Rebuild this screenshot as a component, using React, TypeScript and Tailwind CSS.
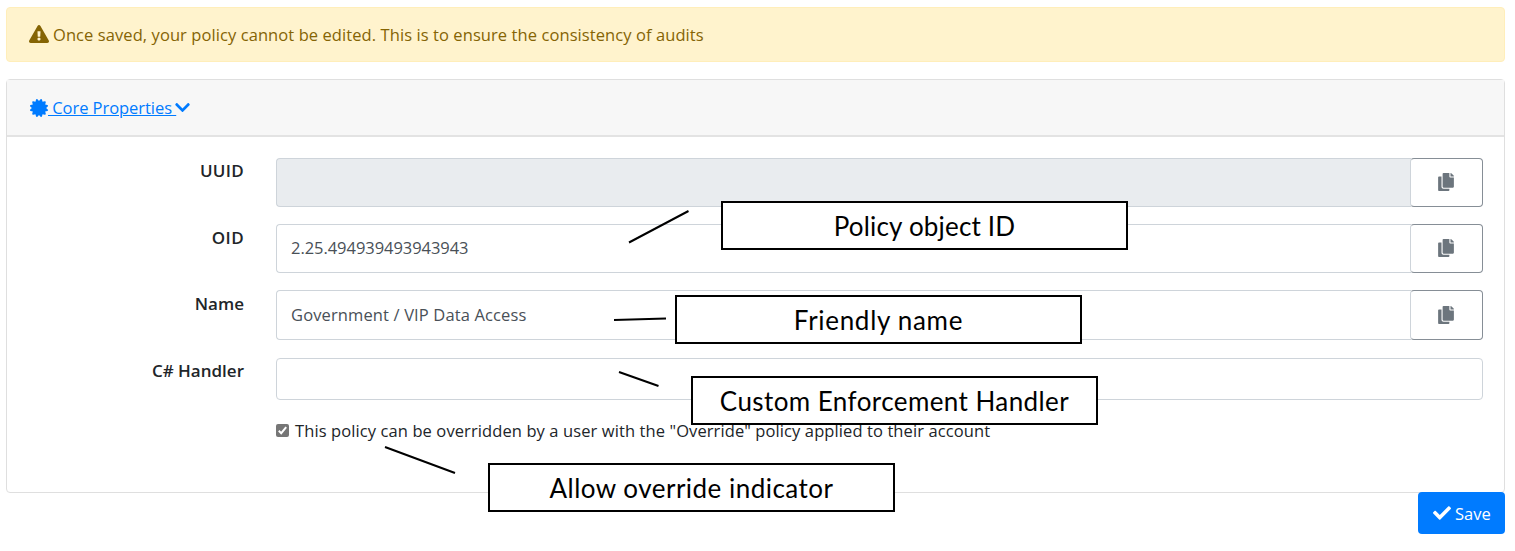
import type { ReactNode } from "react";
import {
  FaCertificate,
  FaCheck,
  FaChevronDown,
  FaCopy,
  FaExclamationTriangle,
} from "react-icons/fa";

function Row({ label, spacing = "leading-[27px]", children }: { label: string; spacing?: string; children: ReactNode }) {
  return (
    <div className="flex">
      <label className={`w-[237px] shrink-0 text-right text-[17px] font-semibold ${spacing}`}>
        {label}
      </label>
      <div className="ml-8 flex min-w-0 flex-1">{children}</div>
    </div>
  );
}

function CopyField({ value, spacing = "", disabled = false }: { value: string; spacing?: string; disabled?: boolean }) {
  return (
    <>
      <input
        readOnly
        defaultValue={value}
        className={`min-w-0 flex-1 rounded-l-[4px] border border-r-0 border-[#ced4da] px-[14px] text-[16.5px] text-[#495057] outline-none ${
          disabled ? "bg-[#e9ecef]" : "bg-white"
        } ${spacing}`}
      />
      <button
        aria-label="Copy"
        className="-ml-px flex w-[73px] items-center justify-center rounded-[4px] border border-[#868e96] border-l-[#ced4da] bg-white pr-px pb-px text-[#6c757d]"
      >
        <FaCopy className="size-[18px]" />
      </button>
    </>
  );
}

function Callout({ text, box, spacing }: { text: string; box: string; spacing: string }) {
  return (
    <div
      className={`absolute flex h-[49px] w-[407px] items-center justify-center border-2 border-black bg-white pt-[2px] font-['Lato',sans-serif] text-[26px] whitespace-nowrap text-black ${box}`}
    >
      <span className={spacing}>{text}</span>
    </div>
  );
}

export default function App() {
  return (
    <div className="relative h-[551px] w-[1515px] overflow-hidden bg-white pt-[7px] pr-[10px] pl-[6px] font-['Open_Sans',sans-serif] text-[#212529]">
      <div className="flex h-[55px] items-center rounded-[4px] border border-[#ffeeba] bg-[#fff3cd] pl-[22px] text-[#856404]">
        <FaExclamationTriangle className="mb-px h-[18px] w-[20px]" />
        <span className="ml-1 pt-px text-[16.5px] tracking-[0.08px] whitespace-nowrap">
          Once saved, your policy cannot be edited. This is to ensure the consistency of audits
        </span>
      </div>

      <section className="mt-[17px] h-[414px] rounded-[4px] border border-[#dfdfdf]">
        <header className="flex h-[57px] items-center border-b-2 border-[#e3e3e3] bg-[#f7f7f7] pl-[23px] text-[#007bff]">
          <FaCertificate className="size-[18px]" />
          <a className="pt-[2px] text-[16.5px] tracking-[-0.05px] whitespace-pre underline">{" Core Properties "}</a>
          <FaChevronDown className="-ml-px h-[17px] w-[15px]" />
        </header>

        <div className="flex flex-col gap-[17px] pt-[21px] pr-[21px]">
          <Row label="UUID" spacing="leading-[26px] tracking-[0.3px]">
            <div className="flex h-[49px] flex-1">
              <CopyField value="" disabled />
            </div>
          </Row>
          <Row label="OID" spacing="leading-[27px] tracking-[0.4px]">
            <div className="flex h-[49px] flex-1">
              <CopyField value="2.25.494939493943943" spacing="tracking-[-0.05px]" />
            </div>
          </Row>
          <Row label="Name">
            <div className="flex h-[50px] flex-1">
              <CopyField value="Government / VIP Data Access" spacing="tracking-[0.13px]" />
            </div>
          </Row>
          <div className="mt-px">
            <Row label="C# Handler" spacing="leading-[26px]">
              <input
                readOnly
                className="h-[42px] flex-1 rounded-[4px] border border-[#ced4da] bg-white outline-none"
              />
            </Row>
          </div>
          <div className="ml-[269px] flex h-[26px] items-center">
            <span className="flex size-[13px] items-center justify-center rounded-[2px] bg-[#767676]">
              <svg viewBox="0 0 13 13" className="size-[13px]" fill="none" stroke="white" strokeWidth="2">
                <path d="M2.8 6.8 5.2 9.2 10.2 3.2" />
              </svg>
            </span>
            <span className="ml-[6px] pt-[2px] text-[16.5px] tracking-[0.1px] whitespace-nowrap">
              This policy can be overridden by a user with the "Override" policy applied to their account
            </span>
          </div>
        </div>
      </section>

      <div className="-mt-px flex justify-end">
        <button className="flex h-[42px] w-[87px] items-center rounded-[4px] bg-[#007bff] pl-[15px] text-white">
          <FaCheck className="size-[18px]" />
          <span className="ml-1 pt-[2px] text-[16.5px]">Save</span>
        </button>
      </div>

      <svg
        className="pointer-events-none absolute inset-0"
        width="1515"
        height="551"
        stroke="black"
        strokeWidth="2"
        fill="none"
      >
        <path d="M629 242.5 688.5 211M614 320 666 318.5M619 372 658.5 386M385 447 455 473" />
      </svg>

      <Callout text="Policy object ID" box="top-[201px] left-[721px]" spacing="tracking-[0.19px]" />
      <Callout text="Friendly name" box="top-[295px] left-[675px]" spacing="tracking-[0.7px]" />
      <Callout text="Custom Enforcement Handler" box="top-[376px] left-[691px]" spacing="tracking-[0.42px]" />
      <Callout text="Allow override indicator" box="top-[463px] left-[488px]" spacing="tracking-[0.48px]" />
    </div>
  );
}
